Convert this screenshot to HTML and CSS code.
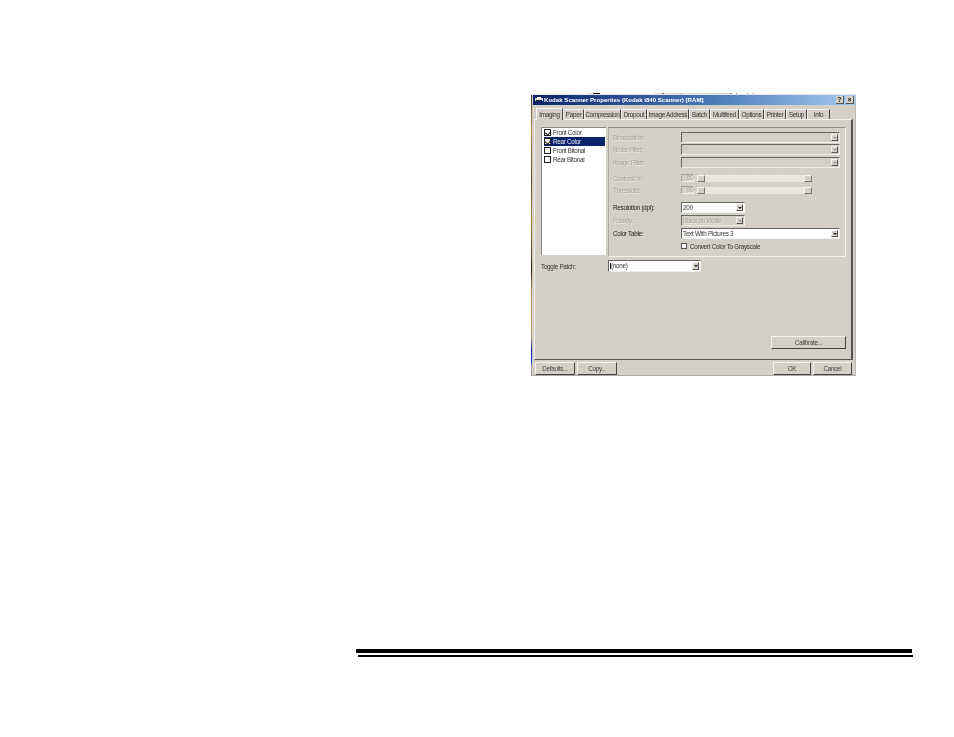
FILE: index.html
```html
<!DOCTYPE html>
<html lang="en">
<head>
<meta charset="utf-8">
<title>Kodak Scanner Properties</title>
<link rel="stylesheet" href="styles.css">
</head>
<body>
<main class="page">
  <div class="specks"></div>
  <section class="dialog">
    <header class="titlebar">
      <svg class="app-icon" viewBox="0 0 8 7"><rect x="0" y="2" width="8" height="3" fill="#d4d0c8"/><rect x="2" y="1" width="4" height="2" fill="#fff"/><rect x="1" y="4" width="6" height="1" fill="#222"/></svg>
      <span class="title">Kodak Scanner Properties (Kodak i840 Scanner) [RAM]</span>
      <span class="caption-btn">?</span>
      <span class="caption-btn">×</span>
    </header>
    <nav class="tabs">
      <span class="tab active w-imaging">Imaging</span>
      <span class="tab w-paper">Paper</span>
      <span class="tab w-compression">Compression</span>
      <span class="tab w-dropout">Dropout</span>
      <span class="tab w-address">Image Address</span>
      <span class="tab w-batch">Batch</span>
      <span class="tab w-multi">Multifeed</span>
      <span class="tab w-options">Options</span>
      <span class="tab w-printer">Printer</span>
      <span class="tab w-setup">Setup</span>
      <span class="tab w-info">Info</span>
    </nav>
    <div class="sheet">
      <div class="upper">
        <ul class="listbox">
          <li class="item"><span class="check on"></span>Front Color</li>
          <li class="item selected"><span class="check on"></span>Rear Color</li>
          <li class="item"><span class="check"></span>Front Bitonal</li>
          <li class="item"><span class="check"></span>Rear Bitonal</li>
        </ul>
        <div class="group">
          <div class="row r1 off"><label>Binarization:</label><span class="combo full disabled"><span class="value"></span><span class="arrow"></span></span></div>
          <div class="row r1 off"><label>Noise Filter:</label><span class="combo full disabled"><span class="value"></span><span class="arrow"></span></span></div>
          <div class="row r1 off"><label>Image Filter:</label><span class="combo full disabled"><span class="value"></span><span class="arrow"></span></span></div>
          <div class="row r2 off first-slider"><label>Contrast %:</label><span class="num">50</span><span class="sbtn left"></span><span class="track"></span><span class="sbtn right"></span></div>
          <div class="row r2 off"><label>Threshold:</label><span class="num">90</span><span class="sbtn left"></span><span class="track"></span><span class="sbtn right"></span></div>
          <div class="row r3 res"><label>Resolution (dpi):</label><span class="combo short"><span class="value">200</span><span class="arrow"></span></span></div>
          <div class="row r3 off"><label>Polarity:</label><span class="combo short disabled"><span class="value">Black on White</span><span class="arrow"></span></span></div>
          <div class="row r3"><label>Color Table:</label><span class="combo full"><span class="value">Text With Pictures 3</span><span class="arrow"></span></span></div>
          <div class="row gray"><span class="check small"></span>Convert Color To Grayscale</div>
        </div>
      </div>
      <div class="toggle">
        <label>Toggle Patch:</label>
        <span class="combo patch"><span class="value"><b class="caret"></b>(none)</span><span class="arrow"></span></span>
      </div>
      <div class="calibrate-row"><button class="btn calibrate">Calibrate...</button></div>
    </div>
    <footer class="footer">
      <button class="btn foot">Defaults...</button>
      <button class="btn foot">Copy...</button>
      <span class="spacer"></span>
      <button class="btn foot ok">OK</button>
      <button class="btn foot cancel">Cancel</button>
    </footer>
  </section>
  <div class="rule-thick"></div>
  <div class="rule-thin"></div>
</main>
</body>
</html>
```
FILE: styles.css
```css
* { box-sizing: border-box; }
html, body { margin: 0; padding: 0; background: #fff; }
body { font-family: "Liberation Sans", Arial, sans-serif; font-size: 6.3px; letter-spacing: -0.27px; color: #222; }
.page { width: 954px; height: 737px; overflow: hidden; padding-top: 93px; }

.specks { height: 1px; margin-left: 590px; width: 170px; background:
  linear-gradient(90deg, #999 0 1px, transparent 1px 3px, #000 3px 10px, transparent 10px 64px, #ddd 64px 72px, #777 72px 74px, #ddd 74px 91px, #888 91px 92px, #ddd 92px 140px, #888 140px 142px, #fff 142px 146px, #888 146px 147px, transparent 147px 157px, #888 157px 158px, transparent 158px 163px, #888 163px 164px, transparent 164px); }

.dialog { width: 325px; height: 282px; margin-left: 531px; padding-left: 1px; background: linear-gradient(180deg, #3a3520 0, #b98a3c 12%, #5c5226 30%, #b0842f 45%, #4a4320 58%, #1f1c10 62%, #c98a4a 70%, #d09a5c 84%, #999 87%, #0a1a80 91%, #1030e0 95%, #999 97%) 0 0 / 1px 100% no-repeat, #d4d0c8; border-right: 1px solid #bbb; border-top: 1px solid #e8e6e0; border-bottom: 1px solid #aaa; display: flex; flex-direction: column; filter: blur(0.25px); }

.titlebar { height: 10px; margin: 0 0 0 1px; display: flex; align-items: center; gap: 1px; padding: 0 1px 0 2px; background: linear-gradient(90deg, #0a246a, #4a78b8 55%, #a6caf0); color: #fff; font-weight: 700; font-size: 6.1px; letter-spacing: 0; }
.app-icon { width: 8px; height: 7px; flex: none; }
.title { flex: 1; white-space: nowrap; }
.caption-btn { width: 8px; height: 8px; background: #d4d0c8; color: #111; font-size: 7px; line-height: 8px; text-align: center; border-right: 1px solid #555; border-bottom: 1px solid #555; font-weight: 700; margin-left: 1px; }

.tabs { display: flex; height: 12px; margin-top: 2px; padding-left: 4px; align-items: flex-end; }
.tab { height: 10px; line-height: 9px; text-align: center; white-space: nowrap; border-top: 1px solid #f4f3ef; border-left: 1px solid #f4f3ef; border-right: 1px solid #444; color: #333; }
.tab.active { height: 12px; line-height: 11px; background: #d4d0c8; position: relative; z-index: 1; margin-bottom: -1px; }
.w-imaging { width: 27px; }
.w-paper { width: 21px; }
.w-compression { width: 37px; }
.w-dropout { width: 26px; }
.w-address { width: 42px; }
.w-batch { width: 21px; }
.w-multi { width: 29px; }
.w-options { width: 25px; }
.w-printer { width: 22px; }
.w-setup { width: 21px; }
.w-info { width: 23px; }

.sheet { width: 319px; height: 243px; margin-left: 2px; border-top: 1px solid #f4f3ef; border-left: 1px solid #f4f3ef; border-right: 2px solid #555; border-bottom: 1px solid #555; display: flex; flex-direction: column; }
.upper { display: flex; margin: 7px 0 0 6px; gap: 2px; height: 130px; }
.listbox { width: 65px; height: 128px; margin: 0; padding: 0 1px 0 2px; list-style: none; background: #fff; border-top: 1px solid #888; border-left: 1px solid #888; }
.item { height: 9px; line-height: 9px; display: flex; align-items: center; gap: 1px; color: #333; white-space: nowrap; }
.item.selected { background: #0a246a; color: #e8e8f0; }
.check { width: 7px; height: 7px; margin-right: 1px; flex: none; background: #fff; border: 1px solid #222; position: relative; }
.check.on::after { content: ""; position: absolute; left: 1px; top: 0; width: 3px; height: 4px; border-right: 1px solid #222; border-bottom: 1px solid #222; transform: rotate(40deg); }

.group { width: 238px; height: 130px; padding: 3px 5px 0 4px; border: 1px solid #aeaaa2; border-right-color: #f4f3ef; border-bottom-color: #f4f3ef; border-top-color: #8f8c85; display: flex; flex-direction: column; }
.row { display: flex; align-items: center; white-space: nowrap; }
.row label { width: 68px; flex: none; }
.r1 { height: 12.5px; }
.r2 { height: 12px; }
.r3 { height: 13px; }
.first-slider { margin-top: 4px; }
.res { margin-top: 5px; }
.off { color: #a5a29b; text-shadow: 0.5px 0.5px 0 #eceae5; }
.gray { height: 12px; padding-left: 68px; color: #333; }
.check.small { width: 6px; height: 6px; margin-right: 3px; border-color: #555; }

.combo { display: flex; height: 11px; padding: 1px; background: #fff; border-top: 1px solid #666; border-left: 1px solid #666; border-bottom: 1px solid #eee; border-right: 1px solid #eee; align-items: stretch; }
.combo.full { width: 160px; }
.combo.short { width: 64px; }
.combo.patch { width: 93px; height: 12px; }
.combo.disabled { background: #d4d0c8; }
.value { flex: 1; line-height: 7px; color: #333; white-space: nowrap; overflow: hidden; }
.disabled .value { color: #a5a29b; }
.arrow { width: 7px; background: #d4d0c8; border-right: 1px solid #555; border-bottom: 1px solid #555; border-top: 1px solid #f4f3ef; border-left: 1px solid #f4f3ef; position: relative; }
.arrow::after { content: ""; position: absolute; left: 1px; top: 2px; border: 2px solid transparent; border-top: 2px solid #222; border-bottom: 0; }
.disabled .arrow::after { border-top-color: #999; }

.num { width: 13px; height: 8px; line-height: 6px; padding-left: 5px; border: 1px solid #a5a29b; border-right-color: #eee; border-bottom-color: #eee; }
.sbtn { width: 8px; height: 7px; background: #d4d0c8; border-right: 1px solid #777; border-bottom: 1px solid #777; border-top: 1px solid #f4f3ef; border-left: 1px solid #f4f3ef; }
.sbtn.left { margin-left: 3px; }
.track { width: 99px; height: 7px; background: repeating-linear-gradient(90deg, #fff 0 1px, transparent 1px 25px) 0 0 / 100% 1px no-repeat, #e8e7e2; }

.toggle { display: flex; align-items: center; margin: 3px 0 0 6px; height: 13px; }
.toggle label { width: 67px; color: #333; }
.caret { display: inline-block; width: 1px; height: 6px; background: #222; vertical-align: -1px; }

.calibrate-row { margin-top: 63px; padding-right: 5px; display: flex; justify-content: flex-end; }
.btn { margin: 0; padding: 0; background: #d4d0c8; color: #444; font: 6.3px "Liberation Sans", Arial, sans-serif; letter-spacing: -0.27px; border-top: 1px solid #f4f3ef; border-left: 1px solid #f4f3ef; border-right: 1px solid #444; border-bottom: 1px solid #444; }
.calibrate { width: 75px; height: 13px; }

.footer { display: flex; gap: 2px; margin-top: 2px; padding: 0 3px 0 3px; height: 13px; }
.foot { width: 40px; height: 13px; }
.foot.ok { width: 38px; }
.foot.cancel { width: 39px; }
.spacer { flex: 1; }

.rule-thick { width: 556px; height: 4px; margin: 273px 0 0 356px; background: #000; }
.rule-thin { width: 555px; height: 1.5px; margin: 2px 0 0 358px; background: #000; }
```
